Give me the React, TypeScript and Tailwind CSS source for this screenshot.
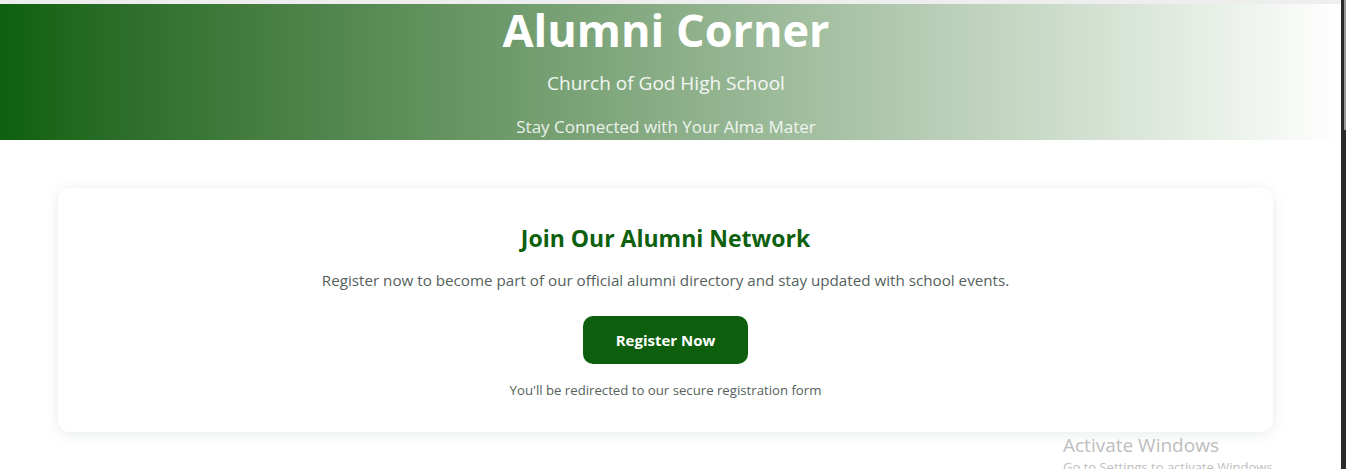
import React from "react";

const App: React.FC = () => {
  return (
    <div className="flex h-screen w-full overflow-hidden bg-white font-['Open_Sans',sans-serif]">
      {/* Page content */}
      <div className="relative flex-1">
        <div className="h-[4px] bg-[#eeeeee]" />

        {/* Hero header */}
        <header className="flex h-[136px] flex-col items-center bg-gradient-to-r from-[#0d600d] to-white pr-[9px] text-white">
          <h1 className="mt-[-4px] text-[45px] font-bold leading-[60px]">Alumni Corner</h1>
          <p className="mt-[9px] text-[19px] leading-[28px] text-white/90">Church of God High School</p>
          <p className="mt-[18px] text-[17px] leading-[24px] text-white/85">Stay Connected with Your Alma Mater</p>
        </header>

        {/* Register card */}
        <section className="ml-[58px] mt-[48px] flex h-[244px] w-[1215px] flex-col items-center rounded-xl bg-white pt-[34px] shadow-[0_2px_14px_rgba(13,80,40,0.10)]">
          <h2 className="text-[23px] font-bold leading-[32px] text-[#0d600d]">Join Our Alumni Network</h2>
          <p className="mt-[14px] text-[15.2px] leading-[24px] text-[#555f5c]">
            Register now to become part of our official alumni directory and stay updated with school events.
          </p>
          <button className="mt-[24px] h-[48px] w-[165px] rounded-[10px] bg-[#0d5e0d] text-[15px] font-bold text-white">
            Register Now
          </button>
          <p className="mt-[16px] text-[13.2px] leading-[20px] text-[#555f5c]">
            You'll be redirected to our secure registration form
          </p>
        </section>

        {/* Windows watermark */}
        <div className="pointer-events-none absolute left-[1063px] top-[432px] text-[#bdbdbd]">
          <div className="text-[19px] leading-[26px]">Activate Windows</div>
          <div className="text-[13px] leading-[18px]">Go to Settings to activate Windows.</div>
        </div>
      </div>

      {/* Scrollbar */}
      <div className="flex w-[5px] bg-[#2b2b2b]">
        <div className="ml-[3px] h-[130px] w-[2px] bg-[#9a9a9a]" />
      </div>
    </div>
  );
};

export default App;
